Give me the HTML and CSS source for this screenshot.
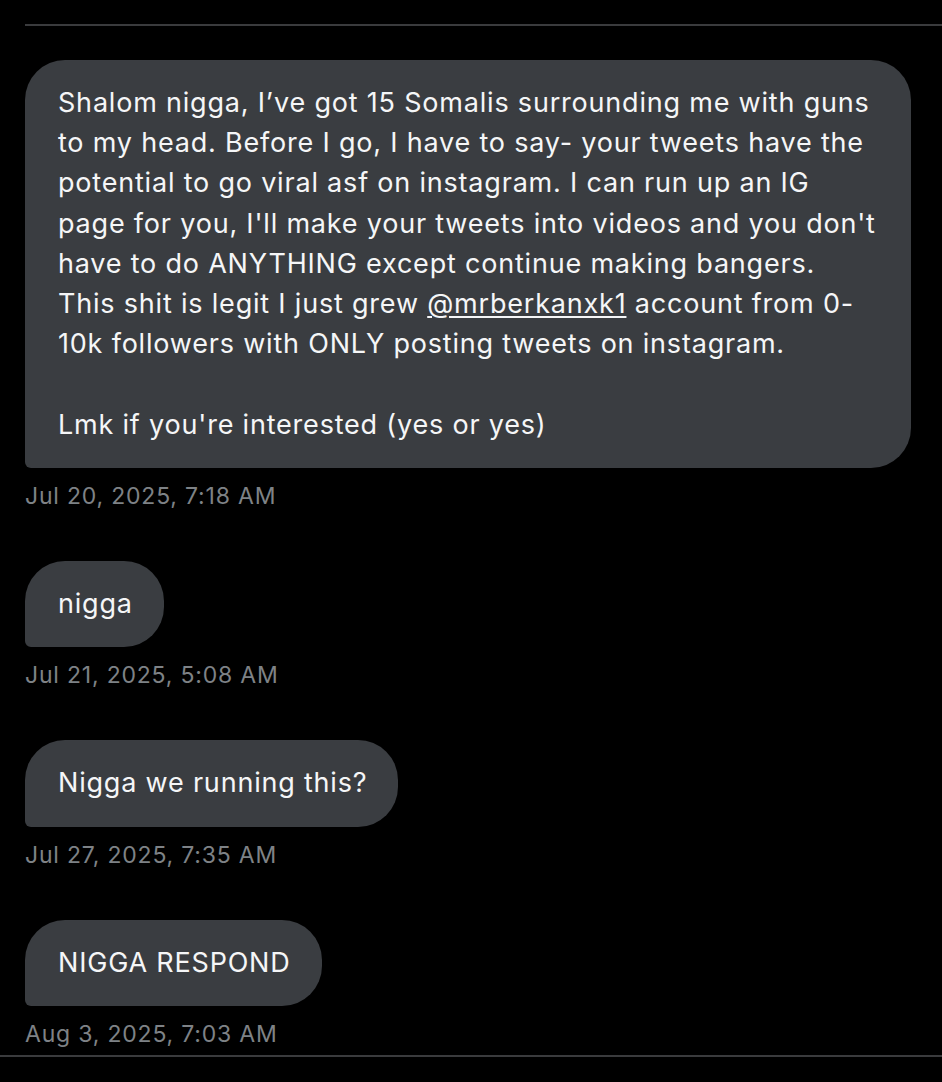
FILE: index.html
```html
<!DOCTYPE html>
<html lang="en">
<head>
<meta charset="utf-8">
<link rel="stylesheet" href="styles.css">
</head>
<body>
<div class="page">
  <div class="rule-top"></div>
  <div class="thread">
    <div class="msg">
      <div class="bubble multi">Shalom nigga, I’ve got 15 Somalis surrounding me with guns<br>to my head. Before I go, I have to say- your tweets have the<br>potential to go viral asf on instagram. I can run up an IG<br>page for you, I'll make your tweets into videos and you don't<br>have to do ANYTHING except continue making bangers.<br>This shit is legit I just grew <span class="mention">@mrberkanxk1</span> account from 0-<br>10k followers with ONLY posting tweets on instagram.<br><br>Lmk if you're interested (yes or yes)</div>
      <div class="time">Jul 20, 2025, 7:18 AM</div>
    </div>
    <div class="msg">
      <div class="bubble">nigga</div>
      <div class="time">Jul 21, 2025, 5:08 AM</div>
    </div>
    <div class="msg">
      <div class="bubble">Nigga we running this?</div>
      <div class="time">Jul 27, 2025, 7:35 AM</div>
    </div>
    <div class="msg">
      <div class="bubble">NIGGA RESPOND</div>
      <div class="time">Aug 3, 2025, 7:03 AM</div>
    </div>
  </div>
  <div class="rule-bottom"></div>
</div>
</body>
</html>
```

FILE: styles.css
```css
html, body {
  margin: 0;
  padding: 0;
  background: #000;
}
body {
  font-family: Inter, "Noto Sans", "Liberation Sans", sans-serif;
  color: #e7e9ea;
  width: 942px;
  height: 1082px;
  overflow: hidden;
}
.page {
  padding-top: 24px;
}
.rule-top {
  height: 2px;
  margin-left: 25px;
  background: #3a3b3d;
}
.thread {
  display: flex;
  flex-direction: column;
  gap: 51px;
  padding: 34px 0 0 25px;
}
.msg {
  display: flex;
  flex-direction: column;
  align-items: flex-start;
}
.bubble {
  background: #3a3d41;
  color: #f5f6f7;
  font-size: 27px;
  line-height: 40.5px;
  padding: 23px 31px 23px 33px;
  border-radius: 40px 40px 40px 6px;
  white-space: nowrap;
  letter-spacing: 0.8px;
}
.bubble.multi {
  width: 822px;
  line-height: 40.2px;
}
.mention {
  text-decoration: underline;
  text-decoration-thickness: 2px;
  text-underline-offset: 3px;
}
.time {
  margin-top: 14px;
  font-size: 23px;
  line-height: 28px;
  color: #7e8286;
  letter-spacing: 0.8px;
}
.rule-bottom {
  height: 2px;
  margin-top: 7px;
  background: #3a3b3d;
}
```
